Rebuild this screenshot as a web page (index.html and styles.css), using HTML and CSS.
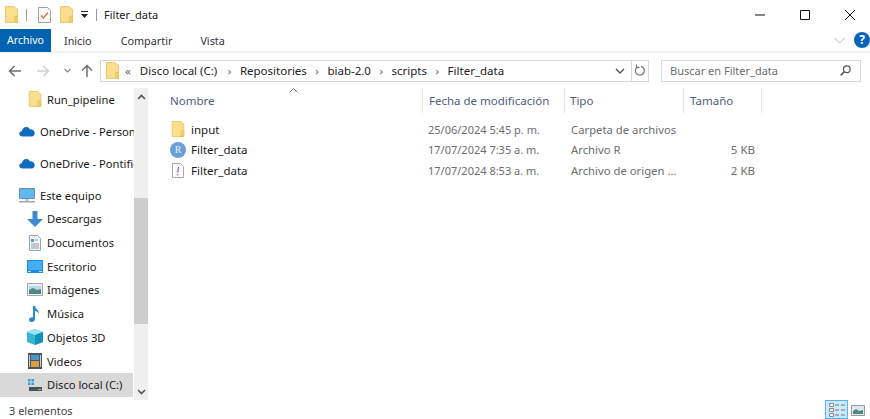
FILE: index.html
```html
<!DOCTYPE html>
<html lang="es">
<head>
  <meta charset="UTF-8" />
  <title>Filter_data</title>
  <link rel="stylesheet" href="styles.css">
</head>
<body>
  <svg class="defs" width="0" height="0">
    <symbol id="folder" viewBox="0 0 14 18">
      <path d="M.5.5h9l4 3v14H.5z" fill="#fbdf8e" stroke="#e6c35c"/>
      <path d="M10.5 11h3v6.5h-3z" fill="#f5cf6b" stroke="#e6c35c"/>
    </symbol>
    <symbol id="cloud" viewBox="0 0 16 11">
      <path d="M3.5 10.5C1.5 10.500.3 9.300.3 7.800c0-1.500 1-2.500 2.500-2.600C3.300 2.800 5 1 7.200 1c1.700 0 3 .9 3.700 2.300 2.700-.4 4.800 1.400 4.800 4 0 1.900-1.300 3.200-3 3.200z" fill="#0f6cbd"/>
    </symbol>
  </svg>

  <div class="titlebar">
    <svg class="qa-folder" width="13" height="17"><use href="#folder"/></svg>
    <span class="qa-sep"></span>
    <svg class="qa-check" width="13" height="16" viewBox="0 0 13 16">
      <path d="M.5.5h9l3 3v12H.5z" fill="#fafafa" stroke="#a0a0a0"/>
      <path d="M3 8.5l2.500 2.500L10 5.500" fill="none" stroke="#e2703a" stroke-width="1.300"/>
    </svg>
    <svg class="qa-folder2" width="13" height="17"><use href="#folder"/></svg>
    <svg class="qa-drop" width="7" height="7" viewBox="0 0 7 7">
      <path d="M0 0h7v1H0zM0 3h7L3.5 7z" fill="#222"/>
    </svg>
    <span class="qa-sep2"></span>
    <span class="title-text">Filter_data</span>
    <div class="win-btns">
      <svg width="10" height="10" viewBox="0 0 10 10"><path d="M0 5h10" stroke="#111"/></svg>
      <svg width="10" height="10" viewBox="0 0 10 10"><path d="M.5.5h9v9h-9z" fill="none" stroke="#111"/></svg>
      <svg width="10" height="10" viewBox="0 0 10 10"><path d="M0 0l10 10M10 0L0 10" stroke="#111"/></svg>
    </div>
  </div>

  <div class="tabs">
    <span class="tab tab-file">Archivo</span>
    <span class="tab tab-inicio">Inicio</span>
    <span class="tab tab-compartir">Compartir</span>
    <span class="tab tab-vista">Vista</span>
    <div class="tabs-right">
      <svg width="11" height="7" viewBox="0 0 11 7"><path d="M.5 1l5 5 5-5" fill="none" stroke="#b5b5b5"/></svg>
      <span class="help">?</span>
    </div>
  </div>

  <div class="addressbar">
    <svg class="nav-arrow" width="13" height="12" viewBox="0 0 13 12"><path d="M13 6H1.500M6.500 1l-5 5 5 5" fill="none" stroke="#6e6e6e" stroke-width="1.500"/></svg>
    <svg class="nav-arrow fwd" width="13" height="12" viewBox="0 0 13 12"><path d="M0 6h11.500M6.500 1l5 5-5 5" fill="none" stroke="#cfcfcf" stroke-width="1.500"/></svg>
    <svg class="nav-down" width="7" height="5" viewBox="0 0 7 5"><path d="M.5 1l3 3 3-3" fill="none" stroke="#8a8a8a" stroke-width="1.200"/></svg>
    <svg class="nav-up" width="12" height="13" viewBox="0 0 12 13"><path d="M6 13V1.500M1 6.500l5-5 5 5" fill="none" stroke="#6e6e6e" stroke-width="1.500"/></svg>
    <div class="path-box">
      <svg class="path-folder" width="13" height="17"><use href="#folder"/></svg>
      <span class="crumb-back">«</span>
      <span class="crumb crumb-first">Disco local (C:)</span><span class="chev">›</span>
      <span class="crumb">Repositories</span><span class="chev">›</span>
      <span class="crumb">biab-2.0</span><span class="chev">›</span>
      <span class="crumb">scripts</span><span class="chev">›</span>
      <span class="crumb">Filter_data</span>
      <svg class="path-drop" width="10" height="6" viewBox="0 0 10 6"><path d="M1 1l4 4 4-4" fill="none" stroke="#555" stroke-width="1.400"/></svg>
      <span class="refresh">
        <svg width="12" height="13" viewBox="0 0 12 13"><path d="M3 3.200a4.500 4.500 0 1 0 4-.9M2.500.5v3h3" fill="none" stroke="#7a7a7a" stroke-width="1.300"/></svg>
      </span>
    </div>
    <div class="search-box">
      <span>Buscar en Filter_data</span>
      <svg width="11" height="11" viewBox="0 0 11 11"><circle cx="6.800" cy="4.200" r="3.400" fill="none" stroke="#555" stroke-width="1.200"/><path d="M4.300 6.800L.7 10.400" stroke="#555" stroke-width="1.600"/></svg>
    </div>
  </div>

  <div class="main">
    <div class="sidebar">
      <div class="nav-list">
        <div class="nav-item sub first">
          <svg width="12" height="16"><use href="#folder"/></svg>
          <span>Run_pipeline</span>
        </div>
        <div class="nav-item top gap">
          <svg width="16" height="11"><use href="#cloud"/></svg>
          <span>OneDrive - Personal</span>
        </div>
        <div class="nav-item top gap">
          <svg width="16" height="11"><use href="#cloud"/></svg>
          <span>OneDrive - Pontificia</span>
        </div>
        <div class="nav-item top gap">
          <svg width="16" height="15" viewBox="0 0 16 15"><path d="M.5.5h15v10H.5z" fill="#5fb9ee" stroke="#6f8ea3"/><path d="M0 13h16v1.500H0z" fill="#9aa7b0"/><path d="M6 11h4v2H6z" fill="#c3ccd2"/></svg>
          <span>Este equipo</span>
        </div>
        <div class="nav-item sub">
          <svg width="16" height="16" viewBox="0 0 16 16"><path d="M5.500 0h5v8H16l-8 8-8-8h5.500z" fill="#3e8ad6"/></svg>
          <span>Descargas</span>
        </div>
        <div class="nav-item sub">
          <svg width="14" height="16" viewBox="0 0 14 16"><path d="M1.500.5h8l3 3v12h-11z" fill="#f4f6f8" stroke="#9aa5ad"/><path d="M3 4h3v3H3z" fill="#5a9bd8"/><path d="M3 9h8M3 11h8M3 13h8M7 5h3" stroke="#8c98a1"/></svg>
          <span>Documentos</span>
        </div>
        <div class="nav-item sub">
          <svg width="16" height="13" viewBox="0 0 16 13"><path d="M0 0h16v13H0z" fill="#1c8ae0"/><path d="M1 1h14v9H1z" fill="#45aef0"/><path d="M1 11h3v1H1zM12 11h3v1h-3z" fill="#c9e6fa"/></svg>
          <span>Escritorio</span>
        </div>
        <div class="nav-item sub">
          <svg width="16" height="13" viewBox="0 0 16 13"><path d="M.5.5h15v12H.5z" fill="#e9eef2" stroke="#a2a8ad"/><path d="M2 3h12v4H2z" fill="#bcd7ea"/><path d="M2 7l4-2 4 2 4-1v5H2z" fill="#4f8a80"/></svg>
          <span>Imágenes</span>
        </div>
        <div class="nav-item sub">
          <svg width="16" height="17" viewBox="0 0 16 17"><path d="M6 1h2c.5 3 4 3.500 4 8-1-2-2.500-3-4-3v8c0 2-1.500 3-3.500 3S2 16 2 14.500 3.500 12 6 12.300z" fill="#2b88d8"/></svg>
          <span>Música</span>
        </div>
        <div class="nav-item sub">
          <svg width="16" height="16" viewBox="0 0 16 16"><path d="M8 0l8 3v10l-8 3-8-3V3z" fill="#34b6d4"/><path d="M0 3l8 3 8-3-8-3z" fill="#9be4f2"/><path d="M8 6v10l8-3V3z" fill="#0f93b8"/></svg>
          <span>Objetos 3D</span>
        </div>
        <div class="nav-item sub">
          <svg width="14" height="16" viewBox="0 0 14 16"><path d="M0 0h14v16H0z" fill="#4a5560"/><path d="M3 2h8v5H3z" fill="#4f94c9"/><path d="M3 8h8v6H3z" fill="#d8a13a"/><path d="M1 2h1v12H1zM12 2h1v12h-1z" fill="#c8ced3"/></svg>
          <span>Videos</span>
        </div>
        <div class="nav-item sub selected">
          <svg width="16" height="14" viewBox="0 0 16 14"><path d="M1 1h2.500v2.500H1zM4.500 1H7v2.500H4.500zM1 4.500h2.500V7H1zM4.500 4.500H7V7H4.500z" fill="#2aa0e6"/><path d="M2 9h13v4H2z" fill="#4c5257"/><path d="M11 11h3v1h-3z" fill="#7fd07a"/></svg>
          <span>Disco local (C:)</span>
        </div>
      </div>
      <div class="scrollbar">
        <svg class="scroll-arrow" width="9" height="6" viewBox="0 0 9 6"><path d="M1 5l3.500-3.500L8 5" fill="none" stroke="#555" stroke-width="1.600"/></svg>
        <div class="thumb"></div>
        <svg class="scroll-arrow" width="9" height="6" viewBox="0 0 9 6"><path d="M1 1l3.500 3.500L8 1" fill="none" stroke="#555" stroke-width="1.600"/></svg>
      </div>
    </div>

    <div class="files">
      <div class="row head">
        <div class="cell c-name">Nombre
          <svg class="sort" width="9" height="5" viewBox="0 0 9 5"><path d="M.5 4.500l4-4 4 4" fill="none" stroke="#777"/></svg>
        </div>
        <div class="cell c-date">Fecha de modificación</div>
        <div class="cell c-type">Tipo</div>
        <div class="cell c-size">Tamaño</div>
      </div>
      <div class="row item item-first">
        <div class="cell c-name">
          <svg width="12" height="16"><use href="#folder"/></svg>
          <span>input</span>
        </div>
        <div class="cell c-date">25/06/2024 5:45 p. m.</div>
        <div class="cell c-type">Carpeta de archivos</div>
        <div class="cell c-size"></div>
      </div>
      <div class="row item">
        <div class="cell c-name">
          <svg width="16" height="16" viewBox="0 0 16 16"><circle cx="8" cy="8" r="8" fill="#6b9fd8"/></svg>
          <b class="r-mark">R</b>
          <span>Filter_data</span>
        </div>
        <div class="cell c-date">17/07/2024 7:35 a. m.</div>
        <div class="cell c-type">Archivo R</div>
        <div class="cell c-size">5 KB</div>
      </div>
      <div class="row item">
        <div class="cell c-name">
          <svg width="16" height="15" viewBox="0 0 16 15"><path d="M2.500.5h8l3 3v11h-11z" fill="#fbfbfb" stroke="#a9a9a9"/><path d="M8.500 4L7.700 9.500M7.500 11v1.300" stroke="#7b4fb5" stroke-width="1.100"/></svg>
          <span>Filter_data</span>
        </div>
        <div class="cell c-date">17/07/2024 8:53 a. m.</div>
        <div class="cell c-type">Archivo de origen ...</div>
        <div class="cell c-size">2 KB</div>
      </div>
    </div>
  </div>

  <div class="statusbar">
    <span class="count">3 elementos</span>
    <div class="view-btns">
      <span class="view-active">
        <svg width="16" height="14" viewBox="0 0 16 14"><path d="M.5.500h4v3h-4zM.5 5.500h4v3h-4zM.5 10.500h4v3h-4z" fill="#f4f4f4" stroke="#8a8a8a"/><path d="M6 2h4M12 2h4M6 7h4M12 7h4M6 12h4M12 12h4" stroke="#777"/></svg>
      </span>
      <svg width="14" height="11" viewBox="0 0 14 11"><path d="M.5.500h13v10H.5z" fill="#dfe8ee" stroke="#9a9a9a"/><path d="M2 6l3-2 3 2 4-1v4H2z" fill="#4f8a80"/></svg>
    </div>
  </div>
</body>
</html>
```

FILE: styles.css
```css
* {
  box-sizing: border-box;
}
html, body {
  margin: 0;
  height: 419px;
  overflow: hidden;
}
body {
  font-family: "Noto Sans", "Open Sans", sans-serif;
  font-size: 11.5px;
  color: #1a1a1a;
  background: #fff;
  display: flex;
  flex-direction: column;
}
.defs {
  display: none;
}
svg {
  flex: none;
}

/* title bar */
.titlebar {
  height: 29px;
  display: flex;
  align-items: center;
  padding-left: 5px;
}
.qa-sep, .qa-sep2 {
  width: 1px;
  height: 12px;
  background: #9a9a9a;
}
.qa-sep {
  margin-left: 8px;
}
.qa-check {
  margin-left: 11px;
}
.qa-folder2 {
  margin-left: 9px;
}
.qa-drop {
  margin-left: 8px;
}
.qa-sep2 {
  margin-left: 8px;
}
.title-text {
  margin-left: 7px;
  margin-bottom: 1px;
  font-size: 11px;
}
.win-btns {
  margin-left: auto;
  display: flex;
  gap: 35px;
  padding-right: 15px;
}

/* ribbon tabs */
.tabs {
  height: 24px;
  display: flex;
  align-items: center;
  border-bottom: 2px solid #f0f0f0;
  font-size: 10.8px;
  color: #333;
}
.tab {
  padding-top: 1px;
}
.tab-file {
  width: 51px;
  height: 23px;
  margin-top: 1px;
  padding-top: 0;
  line-height: 23px;
  text-align: center;
  font-size: 10.5px;
  color: #fff;
  background: #0063b1;
}
.tab-inicio {
  margin-left: 13px;
}
.tab-compartir {
  margin-left: 29px;
}
.tab-vista {
  margin-left: 28px;
}
.tabs-right {
  margin-left: auto;
  display: flex;
  align-items: center;
  gap: 9px;
}
.help {
  width: 16px;
  height: 16px;
  border-radius: 50%;
  background: #0b62bb;
  color: #fff;
  font-weight: 700;
  font-size: 12px;
  line-height: 16px;
  text-align: center;
}

/* address row */
.addressbar {
  height: 35px;
  display: flex;
  align-items: center;
  padding-left: 8px;
}
.nav-arrow.fwd {
  margin-left: 16px;
}
.nav-down {
  margin-left: 14px;
}
.nav-up {
  margin-left: 10px;
}
.path-box {
  margin-left: 7px;
  width: 549px;
  height: 22px;
  border: 1px solid #d9d9d9;
  display: flex;
  align-items: center;
  padding-left: 5px;
  color: #222;
}
.crumb-back {
  margin-left: 6px;
  color: #666;
  margin-right: 9px;
}
.chev {
  margin: 0 8.5px;
  color: #666;
}
.crumb-first {
  margin-right: 2px;
}
.path-drop {
  margin-left: auto;
  margin-right: 6px;
}
.refresh {
  width: 17px;
  height: 20px;
  border-left: 1px solid #d9d9d9;
  display: flex;
  align-items: center;
  justify-content: center;
}
.search-box {
  margin-left: 12px;
  width: 200px;
  height: 22px;
  border: 1px solid #d9d9d9;
  display: flex;
  align-items: center;
  justify-content: space-between;
  padding: 0 9px 0 8px;
  font-size: 11px;
  color: #6d6d6d;
}

/* main area */
.main {
  flex: 1;
  display: flex;
  min-height: 0;
}
.sidebar {
  width: 148px;
  display: flex;
  flex: none;
}
.nav-list {
  width: 134px;
  overflow: hidden;
  font-size: 11.2px;
}
.nav-item {
  height: 23.7px;
  display: flex;
  align-items: center;
  white-space: nowrap;
  overflow: hidden;
}
.nav-item span {
  margin-left: 4px;
}
.nav-item.top {
  padding-left: 19px;
}
.nav-item.top span {
  margin-left: 5px;
}
.nav-item.gap {
  margin-top: 8px;
}
.nav-item.sub {
  width: 133px;
  padding-left: 27px;
}
.nav-item.sub svg {
  width: 16px;
}
.nav-item.first {
  height: 22px;
}
.nav-item.first + .gap {
  margin-top: 10px;
}
.nav-item.selected {
  background: #d9d9d9;
}
.scrollbar {
  width: 14px;
  background: #f0f0f0;
  display: flex;
  flex-direction: column;
  align-items: center;
  padding: 6px 0 5px;
}
.scroll-arrow {
  flex: none;
}
.thumb {
  width: 14px;
  height: 126px;
  margin-top: 98px;
  margin-bottom: auto;
  background: #cdcdcd;
}

/* file list */
.files {
  flex: 1;
  min-width: 0;
}
.row {
  display: flex;
  padding-left: 16px;
}
.cell {
  display: flex;
  align-items: center;
  flex: none;
  white-space: nowrap;
}
.c-name {
  width: 259px;
}
.c-date {
  width: 142px;
}
.c-type {
  width: 119px;
}
.c-size {
  width: 78px;
}
.head {
  height: 25px;
  color: #4c607a;
}
.head .cell {
  position: relative;
  border-right: 1px solid #e5e5e5;
  padding-left: 6px;
}
.head .c-type {
  padding-left: 5px;
}
.sort {
  position: absolute;
  left: 125px;
  top: 0;
}
.item-first {
  margin-top: 6px;
}
.item {
  height: 20.5px;
  color: #6d6d6d;
}
.item .c-name {
  position: relative;
  color: #1a1a1a;
  padding-left: 6px;
}
.item .c-name svg {
  width: 16px;
}
.item .c-name span {
  margin-left: 5px;
}
.item .c-date {
  padding-left: 5px;
  font-size: 11px;
}
.item .c-type {
  padding-left: 6px;
  font-size: 11.3px;
}
.item .c-size {
  justify-content: flex-end;
  padding-right: 7px;
}
.r-mark {
  position: absolute;
  left: 6px;
  width: 16px;
  text-align: center;
  color: #e8f0fa;
  font-family: "Liberation Serif", serif;
  font-size: 10px;
  font-weight: 400;
}

/* status bar */
.statusbar {
  height: 19px;
  display: flex;
  align-items: center;
  justify-content: space-between;
  padding-left: 9px;
  padding-top: 1px;
  color: #444;
  font-size: 11px;
}
.view-btns {
  display: flex;
  align-items: center;
  gap: 3px;
  padding-right: 5px;
}
.view-active {
  width: 23px;
  height: 19px;
  margin-top: -1px;
  background: #cce8ff;
  border: 1px solid #52b4f5;
  display: flex;
  align-items: center;
  justify-content: center;
}
```
